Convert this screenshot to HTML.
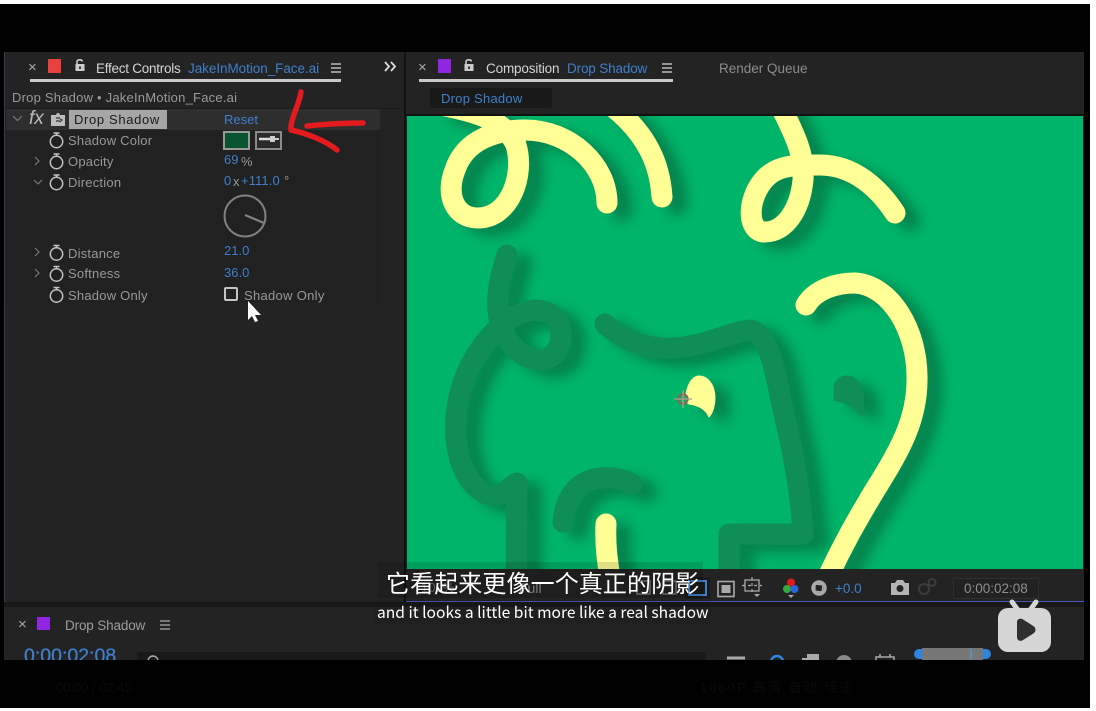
<!DOCTYPE html>
<html><head><meta charset="utf-8">
<style>
html,body{margin:0;padding:0;background:#fff}
#p{position:relative;width:1096px;height:711px;overflow:hidden;background:#fff}
.a{position:absolute}
.t{position:absolute;font-family:"Liberation Sans","Noto Sans CJK SC",sans-serif;font-size:13px;line-height:16px;white-space:nowrap;color:#999}
.l{letter-spacing:.22px}
.b{color:#3f7fcb}
.w{color:#d4d4d4}
.sub{position:absolute;font-family:"Noto Sans CJK SC","Liberation Sans",sans-serif;color:#fff;white-space:nowrap}
</style></head><body><div id="p">
<div class="a" style="left:0;top:4px;width:1090px;height:704px;background:#000"></div>
<!-- panels -->
<div class="a" style="left:4px;top:52px;width:400px;height:550px;background:#232323"></div>
<div class="a" style="left:4px;top:52px;width:1px;height:608px;background:#3a3a55"></div>
<div class="a" style="left:406px;top:52px;width:678px;height:550px;background:#232323"></div>
<div class="a" style="left:404px;top:52px;width:2px;height:550px;background:#111"></div>
<div class="a" style="left:4px;top:607px;width:1080px;height:53px;background:#232323"></div>
<div class="a" style="left:4px;top:602px;width:1080px;height:5px;background:#181818"></div>
<div class="a" style="left:6px;top:109px;width:374px;height:21px;background:#2e2e2e"></div>
<div class="a" style="left:6px;top:108px;width:394px;height:1px;background:#1a1a1a"></div>
<div class="a" style="left:6px;top:130px;width:374px;height:173px;background:#212121"></div>

<!-- effect controls header -->
<div class="t" style="left:28px;top:60px;color:#aaa;font-size:15px">×</div>
<div class="a" style="left:48px;top:59px;width:13px;height:14px;background:#e8403f"></div>
<svg class="a" style="left:73px;top:57px" width="14" height="16" viewBox="0 0 14 16"><path d="M4 7V4.500C4 2.500 9 2 9.500 4.500" fill="none" stroke="#ccc" stroke-width="1.600"/><rect x="2.500" y="7" width="9" height="7" fill="#ccc"/><rect x="6" y="9.500" width="2" height="2.500" fill="#333"/></svg>
<div class="t w" style="left:96px;top:61px;font-size:13.5px;letter-spacing:-.25px">Effect Controls</div>
<div class="t b" style="left:188px;top:61px;font-size:13.5px;letter-spacing:-.05px">JakeInMotion_Face.ai</div>
<svg class="a" style="left:330px;top:62px" width="12" height="12"><path d="M1 2h10M1 6h10M1 10h10" stroke="#bbb" stroke-width="1.400"/></svg>
<div class="a" style="left:30px;top:79px;width:311px;height:2.500px;background:#c8c8c8"></div>
<svg class="a" style="left:383px;top:60px" width="14" height="13"><path d="M2 2l4 4.500-4 4.500M8 2l4 4.500-4 4.500" fill="none" stroke="#ddd" stroke-width="1.800"/></svg>
<div class="t" style="left:12px;top:90px;font-size:13px;color:#9a9a9a;letter-spacing:.22px">Drop Shadow • JakeInMotion_Face.ai</div>

<!-- effect row -->
<svg class="a" style="left:12px;top:114px" width="12" height="10"><path d="M1 2l4.500 4.500L10 2" fill="none" stroke="#777" stroke-width="1.200"/></svg>
<div class="t" style="left:29px;top:109px;font-family:'Liberation Sans',sans-serif;font-style:italic;font-size:19px;line-height:20px;color:#bbb">fx</div>
<svg class="a" style="left:50px;top:112px" width="16" height="15"><path d="M1 3h5l1-2h2l1 2h5v11H1z" fill="#bdbdbd"/><path d="M6 6h4M6 9h4M10 7l2 1-2 2" stroke="#333" stroke-width="1.200" fill="none"/></svg>
<div class="a" style="left:69px;top:110px;width:98px;height:19px;background:#a6a6a6"></div>
<div class="t" style="left:74px;top:112px;color:#1a1a1a;font-size:13px;letter-spacing:.65px">Drop Shadow</div>
<div class="t b" style="left:224px;top:112px">Reset</div>

<!-- rows -->
<svg class="a" style="left:30px;top:130px" width="40" height="180" fill="none" stroke="#c2c2c2" stroke-width="1.500">
<circle cx="26.500" cy="11.500" r="6.200"/><path d="M23.500 3h6M26.500 3v2.500"/>
<circle cx="26.500" cy="32.500" r="6.200"/><path d="M23.500 24h6M26.500 24v2.500"/>
<circle cx="26.500" cy="53.500" r="6.200"/><path d="M23.500 45h6M26.500 45v2.500"/>
<circle cx="26.500" cy="124" r="6.200"/><path d="M23.500 115.500h6M26.500 115.500v2.500"/>
<circle cx="26.500" cy="145" r="6.200"/><path d="M23.500 136.500h6M26.500 136.500v2.500"/>
<circle cx="26.500" cy="166" r="6.200"/><path d="M23.500 157.500h6M26.500 157.500v2.500"/>
<g stroke="#7c7c7c" stroke-width="1.100"><path d="M5 27l4 4-4 4M4 50l4 4 4-4M5 118l4 4-4 4M5 139l4 4-4 4"/></g>
</svg>
<div class="t l" style="left:68px;top:133px">Shadow Color</div>
<div class="t l" style="left:68px;top:154px">Opacity</div>
<div class="t l" style="left:68px;top:175px">Direction</div>
<div class="t l" style="left:68px;top:246px">Distance</div>
<div class="t l" style="left:68px;top:266px">Softness</div>
<div class="t l" style="left:68px;top:288px">Shadow Only</div>
<div class="a" style="left:223px;top:131px;width:23px;height:15px;border:2px solid #999;background:#0a5331"></div>
<div class="a" style="left:255px;top:131px;width:23px;height:15px;border:2px solid #8a8a8a;background:#2a2a2a"></div>
<svg class="a" style="left:257px;top:133px" width="24" height="15"><path d="M2 6h11" stroke="#ddd" stroke-width="2.500"/><rect x="13" y="3" width="5" height="6" fill="#ccc"/><path d="M18 6h4" stroke="#ccc" stroke-width="2"/></svg>
<div class="t b" style="left:224px;top:152px">69</div><div class="t" style="left:241px;top:154px">%</div>
<div class="t b" style="left:224px;top:173px">0</div><div class="t" style="left:233px;top:174px">x</div><div class="t b" style="left:241px;top:173px;letter-spacing:.1px">+111.0</div><div class="t" style="left:284px;top:173px">°</div>
<svg class="a" style="left:222px;top:193px" width="46" height="46"><circle cx="23" cy="23" r="20.500" fill="none" stroke="#818181" stroke-width="2"/><path d="M23 22L42 30" stroke="#818181" stroke-width="2.200"/></svg>
<div class="t b" style="left:224px;top:243px">21.0</div>
<div class="t b" style="left:224px;top:265px">36.0</div>
<div class="a" style="left:224px;top:287px;width:10px;height:10px;border:2px solid #c4c4c4;border-radius:2px;background:#222"></div>
<div class="t l" style="left:244px;top:288px;letter-spacing:.3px">Shadow Only</div>
<svg class="a" style="left:240px;top:298px" width="24" height="28"><path d="M8 3v19l4-4 3 6 3-1-3-6h6z" fill="#fff"/></svg>

<!-- red arrow -->
<svg class="a" style="left:280px;top:85px" width="90" height="75" fill="none" stroke="#e31b1f" stroke-width="5.500" stroke-linecap="round" stroke-linejoin="round"><path d="M21 7C19 20 10 35 11 45C25 48 45 55 57 65"/><path d="M27 41C45 39 65 38 83 38"/></svg>

<!-- comp header -->
<div class="t" style="left:418px;top:60px;color:#aaa;font-size:15px">×</div>
<div class="a" style="left:438px;top:59px;width:13px;height:14px;background:#9126e0"></div>
<svg class="a" style="left:462px;top:57px" width="14" height="16" viewBox="0 0 14 16"><path d="M4 7V4.500C4 2.500 9 2 9.500 4.500" fill="none" stroke="#ccc" stroke-width="1.600"/><rect x="2.500" y="7" width="9" height="7" fill="#ccc"/><rect x="6" y="9.500" width="2" height="2.500" fill="#333"/></svg>
<div class="t w" style="left:486px;top:61px;font-size:13.5px;letter-spacing:-.15px">Composition</div>
<div class="t b" style="left:567px;top:61px;font-size:13.5px;letter-spacing:-.15px">Drop Shadow</div>
<svg class="a" style="left:661px;top:62px" width="12" height="12"><path d="M1 2h10M1 6h10M1 10h10" stroke="#bbb" stroke-width="1.400"/></svg>
<div class="a" style="left:419px;top:79px;width:254px;height:2.500px;background:#c8c8c8"></div>
<div class="t" style="left:719px;top:61px;font-size:13.5px;color:#8c8c8c">Render Queue</div>
<div class="a" style="left:430px;top:88px;width:122px;height:20px;background:#191919;border-radius:2px"></div>
<div class="t b" style="left:441px;top:91px;font-size:13px;letter-spacing:.25px">Drop Shadow</div>
<div class="a" style="left:406px;top:114px;width:678px;height:2px;background:#111"></div>

<!-- artwork -->
<svg class="a" style="left:407px;top:116px" width="676" height="453" viewBox="407 116 676 453">
<defs>
<filter id="s" x="-10%" y="-10%" width="130%" height="130%" color-interpolation-filters="sRGB"><feDropShadow dx="15" dy="8" stdDeviation="6.500" flood-color="#07603a" flood-opacity=".6"/></filter>
</defs>
<rect x="407" y="116" width="676" height="453" fill="#00b56a"/>
<g fill="none" stroke-linecap="round" stroke-linejoin="round" stroke-width="21" filter="url(#s)">
<g stroke="#0f8f57">
<path d="M507 255C497 285 493 312 505 335C515 355 540 367 553 355C568 340 562 310 535 310C505 312 480 345 468 370C455 400 452 430 460 460C468 485 485 498 498 495C505 493 512 485 517 483L516 590"/>
<path d="M605 324C625 342 650 350 675 348C705 346 730 332 750 330C768 332 775 370 781 400C790 440 800 480 803 534L729 534L729 590"/>
<path d="M563 522C565 495 580 480 600 478C615 477 625 480 632 484"/>
<path d="M834 386C837 377 845 374 852 377C863 382 866 398 862 416C856 406 845 403 834 400Z" fill="#0f8f57" stroke-width="1"/>
</g>
<g stroke="#ffff96">
<path d="M445 106C475 112 505 120 516 145C525 175 510 218 478 218C455 218 445 195 455 170C465 140 495 130 525 130C570 130 607 165 607 203"/>
<path d="M662 197C660 165 648 135 612 106"/>
<path d="M780 105C795 135 805 155 803 180C800 210 785 232 765 232C750 232 747 210 757 190C770 165 790 165 820 165C855 165 880 190 895 213"/>
<path d="M806 305C815 290 835 283 855 283C890 285 918 330 917 380C917 420 900 450 875 490C860 515 842 545 822 590"/>
<path d="M606 524C605 545 607 560 612 590"/>
<path d="M699 376C708 376 715 385 715 398C715 405 713 413 709 417C705 408 697 405 689 404C682 400 688 376 699 376Z" fill="#ffff96" stroke-width="1"/>
</g>
</g>
<g fill="none" stroke="#c0464a" stroke-width="1.300"><circle cx="683" cy="399" r="5" fill="#1aa868"/><path d="M683 390v18M674 399h18" stroke="#b59b8a"/></g>
</svg>

<!-- toolbar -->
<div class="a" style="left:406px;top:569px;width:678px;height:32px;background:#232323"></div>
<div class="a" style="left:406px;top:601px;width:678px;height:1px;background:#4658b8"></div>
<div class="t" style="left:421px;top:580px;color:#6f6f6f">100%</div>
<div class="t" style="left:519px;top:580px;color:#8c8c8c;font-size:14px">Full</div>
<svg class="a" style="left:635px;top:574px" width="430" height="27" fill="none">
<rect x="2" y="7" width="13" height="13" stroke="#777" stroke-width="1.400"/>
<rect x="28" y="7" width="13" height="13" stroke="#777" stroke-width="1.400"/>
<rect x="50" y="3" width="25" height="22" fill="#1a1a1a"/>
<rect x="54" y="7" width="17" height="14" stroke="#3f7fcb" stroke-width="2"/>
<rect x="83" y="7.500" width="16" height="15" stroke="#aaa" stroke-width="1.600"/><rect x="86.500" y="11" width="9" height="8" fill="#aaa"/>
<rect x="110" y="6" width="14" height="11" stroke="#aaa" stroke-width="1.300"/><path d="M117 3v18M107 11.500h20" stroke="#aaa" stroke-width="1.200" stroke-dasharray="3 3"/><path d="M119 20h6l-3 3z" fill="#aaa"/>
<circle cx="156" cy="8.500" r="4" fill="#e01818"/><circle cx="152" cy="15" r="4" fill="#2faa3c"/><circle cx="159.500" cy="15" r="4" fill="#2f62d8"/><path d="M153 21h6l-3 3z" fill="#aaa"/>
<circle cx="184" cy="14" r="6" stroke="#aaa" stroke-width="3.400"/><path d="M179 10l9 1M188 9l-1 9M188 18l-9-1M180 19l0-8" stroke="#aaa" stroke-width="1.200"/>
<path d="M256 9h4l2-3h6l2 3h4v12h-18z" fill="#b4b4b4"/><circle cx="265" cy="14.500" r="3.500" fill="#232323"/>
<circle cx="289" cy="15" r="5" stroke="#3c3c3c" stroke-width="2"/><circle cx="297" cy="8.500" r="3.500" stroke="#3c3c3c" stroke-width="2"/>
<rect x="318.500" y="4.500" width="85" height="20" stroke="#2e2e2e" fill="#212121"/>
</svg>
<div class="t b" style="left:835px;top:581px;font-size:13.500px">+0.0</div>
<div class="t" style="left:964px;top:581px;color:#8f8f8f;font-size:13.500px">0:00:02:08</div>

<!-- timeline -->
<div class="t" style="left:18px;top:617px;color:#aaa;font-size:15px">×</div>
<div class="a" style="left:37px;top:617px;width:13px;height:13px;background:#9126e0"></div>
<div class="t" style="left:65px;top:618px;color:#9c9c9c;font-size:13.500px;letter-spacing:-.15px">Drop Shadow</div>
<svg class="a" style="left:159px;top:619px" width="12" height="12"><path d="M1 2h10M1 6h10M1 10h10" stroke="#aaa" stroke-width="1.300"/></svg>
<div class="a" style="left:0;top:640px;width:1090px;height:20px;overflow:hidden">
<div class="t b" style="left:24px;top:6px;font-size:19.500px;line-height:20px;-webkit-text-stroke:.3px #3f7fcb">0:00:02:08</div>
<div class="a" style="left:137px;top:12px;width:569px;height:10px;background:#191919;border-radius:2px"></div>
<svg class="a" style="left:145px;top:14px" width="16" height="8"><circle cx="8" cy="7" r="5" fill="none" stroke="#aaa" stroke-width="1.400"/></svg>
<svg class="a" style="left:720px;top:10px" width="180" height="12" fill="none">
<path d="M7 8h18" stroke="#aaa" stroke-width="3"/><circle cx="57" cy="12" r="6" stroke="#2f84e0" stroke-width="2.400"/>
<path d="M82 8h5V4h12v10H82z" fill="#aaa"/><circle cx="124" cy="13" r="8" fill="#888"/><path d="M156 7h18v7h-18zM160 7V4M170 7V4" stroke="#aaa" stroke-width="1.500"/></svg>
<div class="a" style="left:914px;top:9px;width:77px;height:10px;background:#2f84e0;border-radius:5px"></div>
<div class="a" style="left:922px;top:8px;width:61px;height:12px;background:#777"></div>
<div class="a" style="left:970px;top:9px;width:2px;height:10px;background:#5f8fbf"></div>
</div>

<!-- bilibili -->
<svg class="a" style="left:995px;top:598px" width="60" height="58"><path d="M17 4l6 8M41 4l-6 8" stroke="#d6d6d6" stroke-width="5" stroke-linecap="round"/><rect x="3" y="10" width="53" height="44" rx="10" fill="#d6d6d6"/><path d="M23 24C23 22 25 21 27 22L38 29C40 30.500 40 33 38 34.500L27 41.500C25 42.500 23 41.500 23 39Z" fill="#2f2f2f" stroke="#2f2f2f" stroke-width="2"/></svg>

<!-- subtitles -->
<div class="a" style="left:378px;top:562px;width:325px;height:36px;background:rgba(0,0,0,.12)"></div>
<div class="a" style="left:375px;top:600px;width:336px;height:25px;background:rgba(0,0,0,.07)"></div>
<div class="sub" style="left:386px;top:564px;font-size:24px;line-height:36px;letter-spacing:.1px">它看起来更像一个真正的阴影</div>
<div class="sub" style="left:377px;top:601px;font-size:15.600px;line-height:23px">and it looks a little bit more like a real shadow</div>

<!-- faint bottom bar -->
<div class="t" style="left:56px;top:680px;color:#0a0a0a">00:00 / 02:45</div>
<div class="t" style="left:700px;top:680px;color:#0a0a0a;letter-spacing:2px">1080P 高清 自动 倍速</div>
</div></body></html>
